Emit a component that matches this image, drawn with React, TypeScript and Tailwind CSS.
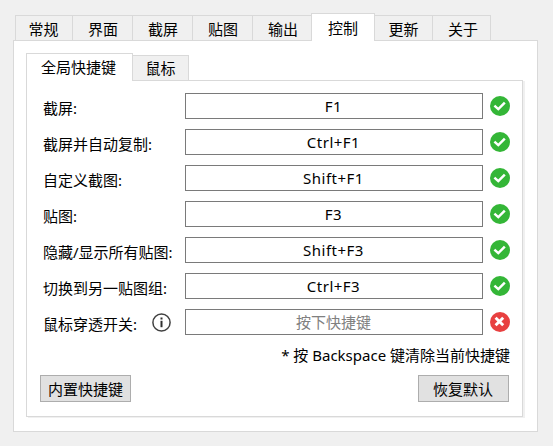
type TabItem = { label: string; width: string };

const mainTabs: TabItem[] = [
  { label: "常规", width: "w-[58px] pr-px" },
  { label: "界面", width: "w-[61px] pl-px" },
  { label: "截屏", width: "w-[61px] pl-px" },
  { label: "贴图", width: "w-[61px] pl-px" },
  { label: "输出", width: "w-[60px] pl-0.5" },
  { label: "控制", width: "w-16" },
  { label: "更新", width: "w-[59px]" },
  { label: "关于", width: "w-[59px] pl-[3px]" },
];

type Shortcut = { label: string; keys?: string; info?: boolean };

const shortcuts: Shortcut[] = [
  { label: "截屏:", keys: "F1" },
  { label: "截屏并自动复制:", keys: "Ctrl+F1" },
  { label: "自定义截图:", keys: "Shift+F1" },
  { label: "贴图:", keys: "F3" },
  { label: "隐藏/显示所有贴图:", keys: "Shift+F3" },
  { label: "切换到另一贴图组:", keys: "Ctrl+F3" },
  { label: "鼠标穿透开关:", info: true },
];

function OkIcon() {
  return (
    <svg width="20" height="20" viewBox="0 0 20 20" className="ml-[7px] shrink-0">
      <circle cx="10" cy="10" r="10" fill="#34b637" />
      <path d="M4.4 9.6L8.3 13.1L14.8 6.6" fill="none" stroke="#fff" strokeWidth="2.5" />
    </svg>
  );
}

function ErrorIcon() {
  return (
    <svg width="20" height="20" viewBox="0 0 20 20" className="ml-[7px] shrink-0">
      <circle cx="10" cy="10" r="10" fill="#e84040" />
      <path d="M5.6 5.7L13.2 13.3M13.2 5.7L5.6 13.3" fill="none" stroke="#fff" strokeWidth="2.9" />
    </svg>
  );
}

function InfoIcon() {
  return (
    <svg width="19" height="19" viewBox="0 0 19 19" className="ml-[15px] shrink-0">
      <circle cx="9.5" cy="9.5" r="8.6" fill="none" stroke="#404040" strokeWidth="1.5" />
      <rect x="8.5" y="4.5" width="2" height="2" fill="#303030" />
      <rect x="8.5" y="7.8" width="2" height="6.4" fill="#303030" />
    </svg>
  );
}

function ShortcutRow({ label, keys, info }: Shortcut) {
  return (
    <div className="flex h-[26px] items-center">
      <div className="flex w-[142px] shrink-0 items-center">
        <span className="pt-1 whitespace-nowrap">{label}</span>
        {info && <InfoIcon />}
      </div>
      <div
        className={
          "flex h-[26px] w-[298px] shrink-0 items-center justify-center border border-[#7a7a7a] bg-white " +
          (keys ? "pr-px tracking-[0.5px]" : "pr-px text-[#808080]")
        }
      >
        {keys ?? "按下快捷键"}
      </div>
      {keys ? <OkIcon /> : <ErrorIcon />}
    </div>
  );
}

export default function App() {
  return (
    <div className="flex h-[446px] w-[553px] flex-col bg-[#f0f0f0] pt-[13px] pl-[13px] font-['Noto_Sans','Noto_Sans_CJK_SC',sans-serif] text-[15px] leading-5 text-black">
      <div className="z-10 -mb-px flex h-7 items-end pl-0.5">
        {mainTabs.map((tab) =>
          tab.label === "控制" ? (
            <div
              key={tab.label}
              className={`${tab.width} z-10 -mr-px h-7 shrink-0 border border-b-0 border-[#d9d9d9] bg-white pt-1 text-center`}
            >
              {tab.label}
            </div>
          ) : (
            <div
              key={tab.label}
              className={`${tab.width} -mr-px h-[26px] shrink-0 border border-[#d9d9d9] bg-[#f0f0f0] pt-[3px] text-center`}
            >
              {tab.label}
            </div>
          ),
        )}
      </div>
      <div className="h-[392px] w-[525px] border border-[#d9d9d9] bg-white pt-3 pl-3">
        <div className="relative z-10 -mb-px flex h-7 items-end">
          <div className="h-7 w-[107px] border border-b-0 border-[#d9d9d9] bg-white pt-[3px] pr-0.5 text-center">
            全局快捷键
          </div>
          <div className="-ml-px h-[26px] w-[57px] border border-[#d9d9d9] bg-[#f0f0f0] pt-0.5 text-center">
            鼠标
          </div>
        </div>
        <div className="h-[337px] w-[497px] border border-[#d9d9d9] bg-white pt-3 pl-4 shadow-[2px_1px_0_0_#f0f0f0]">
          <div className="flex flex-col gap-[10px]">
            {shortcuts.map((s) => (
              <ShortcutRow key={s.label} {...s} />
            ))}
          </div>
          <div className="mt-[10px] w-[467px] text-right whitespace-nowrap">
            * 按 Backspace 键清除当前快捷键
          </div>
          <div className="mt-[10px] -ml-[3px] flex w-[469px] justify-between">
            <button className="h-[27px] w-[91px] border border-[#adadad] bg-[#e1e1e1] pt-px">内置快捷键</button>
            <button className="h-[27px] w-[91px] border border-[#adadad] bg-[#e1e1e1] pt-px pr-px">恢复默认</button>
          </div>
        </div>
      </div>
    </div>
  );
}
